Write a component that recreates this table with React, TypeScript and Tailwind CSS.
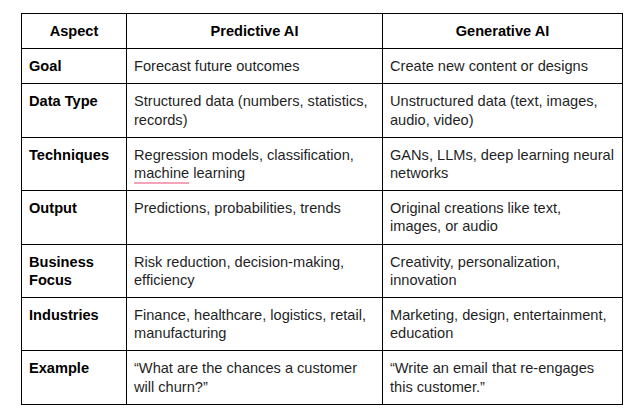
const rows: { aspect: string[]; predictive: React.ReactNode; generative: React.ReactNode }[] = [
  { aspect: ["Goal"], predictive: "Forecast future outcomes", generative: "Create new content or designs" },
  {
    aspect: ["Data Type"],
    predictive: "Structured data (numbers, statistics, records)",
    generative: "Unstructured data (text, images, audio, video)",
  },
  {
    aspect: ["Techniques"],
    predictive: (
      <>
        Regression models, classification,{" "}
        <span className="underline decoration-[#f4a3b8] decoration-2 underline-offset-[4px]">machine</span> learning
      </>
    ),
    generative: "GANs, LLMs, deep learning neural networks",
  },
  {
    aspect: ["Output"],
    predictive: "Predictions, probabilities, trends",
    generative: "Original creations like text, images, or audio",
  },
  {
    aspect: ["Business", "Focus"],
    predictive: "Risk reduction, decision-making, efficiency",
    generative: "Creativity, personalization, innovation",
  },
  {
    aspect: ["Industries"],
    predictive: "Finance, healthcare, logistics, retail, manufacturing",
    generative: "Marketing, design, entertainment, education",
  },
  {
    aspect: ["Example"],
    predictive: "\u201cWhat are the chances a customer will churn?\u201d",
    generative: "\u201cWrite an email that re-engages this customer.\u201d",
  },
];

export default function App() {
  return (
    <div className="w-[643px] h-[416px] bg-white pl-[21px] pt-[13px] font-['Liberation_Sans',Arial,sans-serif] text-[14.6px] leading-[18.2px] text-black">
      <table className="table-fixed border-collapse w-[601px]">
        <colgroup>
          <col className="w-[105px]" />
          <col className="w-[256px]" />
          <col className="w-[240px]" />
        </colgroup>
        <thead>
          <tr>
            <th className="border border-black px-[7px] py-[8px] text-center font-bold">Aspect</th>
            <th className="border border-black px-[7px] py-[8px] text-center font-bold">Predictive AI</th>
            <th className="border border-black px-[7px] py-[8px] text-center font-bold">Generative AI</th>
          </tr>
        </thead>
        <tbody>
          {rows.map((r) => (
            <tr key={r.aspect.join(" ")}>
              <td className="border border-black px-[7px] py-[8px] align-top font-bold">
                {r.aspect.map((a, i) => (
                  <div key={i}>{a}</div>
                ))}
              </td>
              <td className="border border-black px-[7px] py-[8px] align-top text-[#1f1f1f]">{r.predictive}</td>
              <td className="border border-black px-[7px] py-[8px] align-top text-[#1f1f1f]">{r.generative}</td>
            </tr>
          ))}
        </tbody>
      </table>
    </div>
  );
}
